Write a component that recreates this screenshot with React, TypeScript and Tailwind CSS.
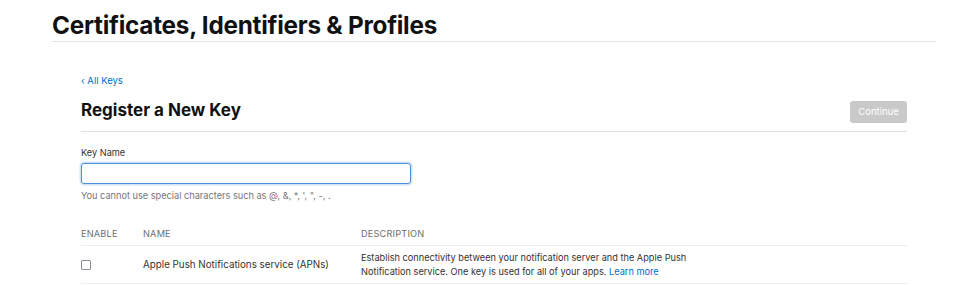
export default function App() {
  return (
    <div className="min-h-screen bg-white font-['Inter',sans-serif] text-[#1d1d1f]">
      <div className="ml-[52px] w-[884px]">
        <h1 className="pt-[13px] pb-[3px] text-[24.3px] font-bold leading-[25px] tracking-[-0.01em] text-[#111]">
          Certificates, Identifiers &amp; Profiles
        </h1>
        <div className="h-px bg-[#e3e3e3]" />

        <div className="px-[29px]">
          <a className="mt-[33px] block text-[9.5px] leading-[12px] text-[#0070c9]" href="#">
            ‹ All Keys
          </a>

          <div className="mt-[13px] flex items-start justify-between">
            <h2 className="text-[17px] font-bold leading-[20px] text-[#111]">Register a New Key</h2>
            <button
              type="button"
              className="mt-[1px] h-[22px] w-[57px] rounded-[3px] bg-[#c9c9c9] text-[9.5px] text-white"
            >
              Continue
            </button>
          </div>
          <div className="mt-[8px] h-px bg-[#dedede]" />

          <label className="mt-[15px] block text-[9.2px] leading-[12px] text-[#333]">Key Name</label>
          <input
            type="text"
            className="mt-[4px] block h-[21px] w-[330px] rounded-[3px] border border-[#4a90d9] shadow-[0_0_0_1.5px_rgba(74,144,217,0.25)] outline-none"
          />
          <p className="mt-[6px] text-[9.2px] leading-[12px] text-[#777]">
            You cannot use special characters such as @, &amp;, *, ', ", -, .
          </p>

          <div className="mt-[26px] grid grid-cols-[62px_218px_1fr] text-[9.2px] uppercase leading-[12px] tracking-[0.02em] text-[#6e6e6e]">
            <span>Enable</span>
            <span>Name</span>
            <span>Description</span>
          </div>
          <div className="mt-[5px] h-px bg-[#ececec]" />

          <div className="grid grid-cols-[62px_218px_1fr] items-center pt-[5px] pb-[4px] text-[9.2px] leading-[14px] text-[#333]">
            <span className="block h-[10px] w-[10px] rounded-[1px] border border-[#8e8e9a]" />
            <span className="text-[9.8px]">Apple Push Notifications service (APNs)</span>
            <p className="w-[340px]">
              Establish connectivity between your notification server and the Apple Push Notification service. One key is
              used for all of your apps. <span className="text-[#0070c9]">Learn more</span>
            </p>
          </div>
          <div className="h-px bg-[#ececec]" />
        </div>
      </div>
    </div>
  )
}
